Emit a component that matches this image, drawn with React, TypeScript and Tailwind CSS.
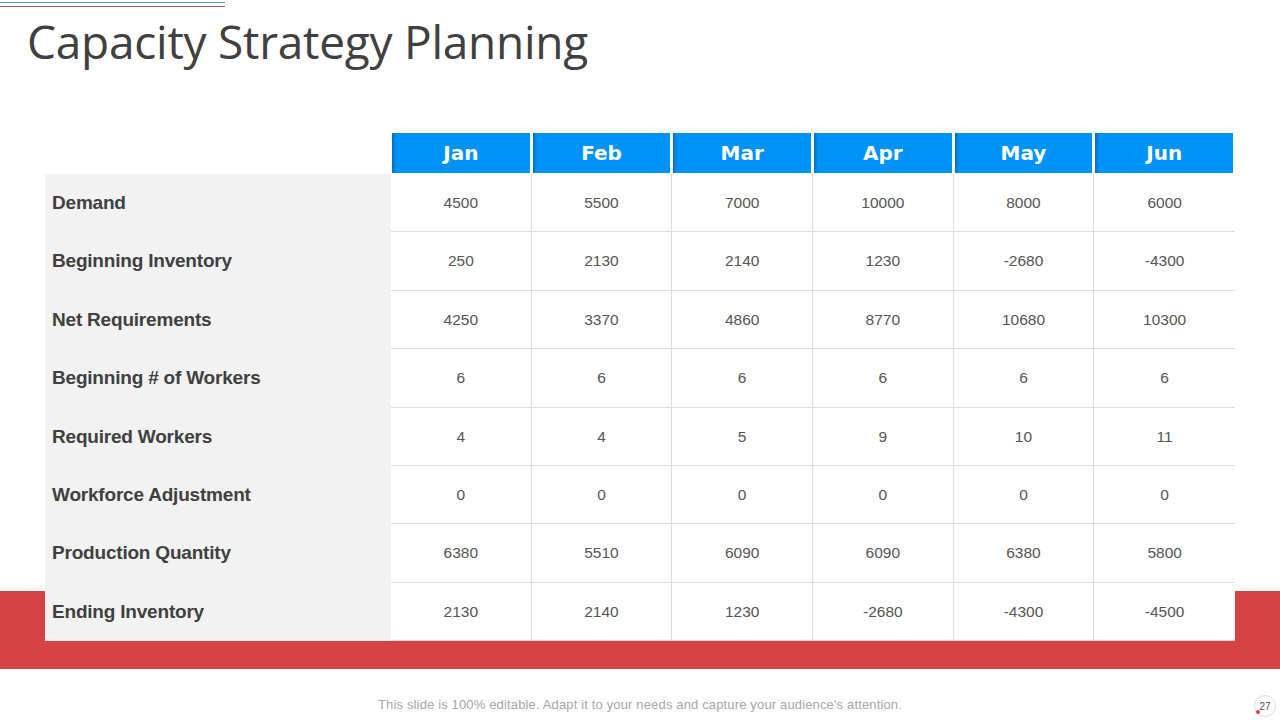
const months = ['Jan', 'Feb', 'Mar', 'Apr', 'May', 'Jun']

const rows: { label: string; values: string[] }[] = [
  { label: 'Demand', values: ['4500', '5500', '7000', '10000', '8000', '6000'] },
  { label: 'Beginning Inventory', values: ['250', '2130', '2140', '1230', '-2680', '-4300'] },
  { label: 'Net Requirements', values: ['4250', '3370', '4860', '8770', '10680', '10300'] },
  { label: 'Beginning # of Workers', values: ['6', '6', '6', '6', '6', '6'] },
  { label: 'Required Workers', values: ['4', '4', '5', '9', '10', '11'] },
  { label: 'Workforce Adjustment', values: ['0', '0', '0', '0', '0', '0'] },
  { label: 'Production Quantity', values: ['6380', '5510', '6090', '6090', '6380', '5800'] },
  { label: 'Ending Inventory', values: ['2130', '2140', '1230', '-2680', '-4300', '-4500'] },
]

export default function App() {
  return (
    <div className="w-[1280px] h-[720px] bg-white flex flex-col overflow-hidden font-['Liberation_Sans',sans-serif]">
      {/* top accent lines */}
      <div className="flex flex-col pt-[2px] gap-[3px] w-[225px]">
        <div className="h-px bg-[#4a9cc0]" />
        <div className="h-px bg-[#a0604c]" />
      </div>

      <h1 className="ml-[27px] mt-[8px] text-[46px] leading-[52px] text-[#404040] font-['Open_Sans',sans-serif] tracking-[-0.25px]">
        Capacity Strategy Planning
      </h1>

      {/* table */}
      <div className="relative z-10 ml-[45px] mt-[66px] w-[1190px] grid grid-cols-[346px_repeat(6,1fr)]">
        <div className="h-[41px]" />
        {months.map((m) => (
          <div key={m} className="h-[41px] pl-[1px] pr-[2px]">
            <div className="h-[40px] bg-[#0093f7] shadow-[inset_4px_0_3px_-2px_rgba(0,60,120,0.45)] flex items-center justify-center text-white text-[20px] font-bold font-['DejaVu_Sans',sans-serif]">
              {m}
            </div>
          </div>
        ))}

        {rows.map((r) => (
          <div key={r.label} className="contents">
            <div className="h-[58.4px] bg-[#f2f2f2] flex items-center pl-[7px] text-[19px] font-bold text-[#404040] tracking-[-0.2px]">
              {r.label}
            </div>
            {r.values.map((v, i) => (
              <div
                key={i}
                className={`h-[58.4px] bg-white border-b border-[#dedede] flex items-center justify-center text-[15.5px] text-[#555555] ${i < 5 ? 'border-r' : ''}`}
              >
                {v}
              </div>
            ))}
          </div>
        ))}
      </div>

      {/* red band behind the last row */}
      <div className="mt-[-50px] h-[78px] bg-[#d74343]" />

      {/* footer */}
      <div className="relative flex-1 flex items-start justify-center pt-[28px]">
        <p className="text-[13px] leading-[16px] text-[#a6a6a6] tracking-[0.15px]">
          This slide is 100% editable. Adapt it to your needs and capture your audience's attention.
        </p>
        <div className="absolute right-[4px] top-[26px] w-[22px] h-[22px] rounded-full border border-[#dddddd] flex items-center justify-center text-[10px] text-[#555555]">
          27
          <span className="absolute left-[1px] bottom-[2px] w-[4px] h-[4px] rounded-full bg-[#d74343]" />
        </div>
      </div>
    </div>
  )
}
